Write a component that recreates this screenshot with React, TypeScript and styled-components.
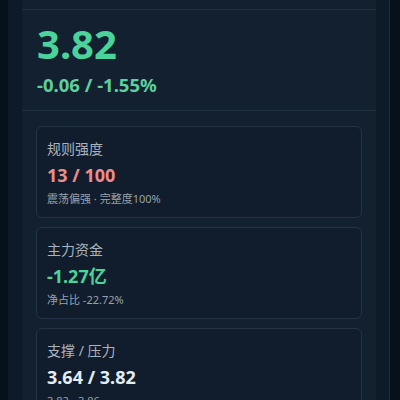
import React from "react";
import styled, { createGlobalStyle } from "styled-components";

const GlobalStyle = createGlobalStyle`
  html, body {
    margin: 0;
    padding: 0;
    background: #06111c;
    font-family: "Noto Sans", "Noto Sans CJK SC", sans-serif;
    overflow: hidden;
  }
`;

const Page = styled.div`
  height: 400px;
  padding: 0 10px 0 8px;
  display: flex;
`;

const Panel = styled.div`
  flex: 1;
  background: #0e1a28;
  border-right: 1px solid #1d2b3a;
  padding: 0 13px 0 14px;
  display: flex;
`;

const Column = styled.div`
  flex: 1;
  background: #122030;
  padding: 9px 0 0;
`;

const PriceSection = styled.section`
  border-top: 1px solid #223142;
  border-bottom: 1px solid #223142;
  padding: 10px 15px 14px;
`;

const Price = styled.div`
  font-size: 40px;
  line-height: 48px;
  font-weight: 700;
  color: #4ad49b;
`;

const Change = styled.div`
  margin-top: 5px;
  font-size: 18.5px;
  line-height: 23px;
  font-weight: 700;
  color: #5ccf9e;
`;

const CardList = styled.div`
  display: flex;
  flex-direction: column;
  gap: 9px;
  padding: 15px 14px 0;
`;

const Card = styled.div`
  border: 1px solid #243446;
  border-radius: 6px;
  background: #111d2c;
  padding: 12px 10px 10px;
`;

const CardTitle = styled.div`
  font-size: 14px;
  line-height: 20px;
  color: #a9b3bf;
`;

const CardValue = styled.div<{ tone: string }>`
  margin-top: 5px;
  font-size: 18px;
  line-height: 23px;
  font-weight: 700;
  color: ${(p) => p.tone};
`;

const CardNote = styled.div`
  margin-top: 4px;
  font-size: 11px;
  line-height: 16px;
  color: #97a2ae;
`;

const cards = [
  { title: "规则强度", value: "13 / 100", tone: "#ee8b8b", note: "震荡偏强 · 完整度100%" },
  { title: "主力资金", value: "-1.27亿", tone: "#4ad49b", note: "净占比 -22.72%" },
  { title: "支撑 / 压力", value: "3.64 / 3.82", tone: "#e4ecf4", note: "3.82 - 3.86" },
];

export default function App() {
  return (
    <Page>
      <GlobalStyle />
      <Panel>
        <Column>
          <PriceSection>
            <Price>3.82</Price>
            <Change>-0.06 / -1.55%</Change>
          </PriceSection>
          <CardList>
            {cards.map((c) => (
              <Card key={c.title}>
                <CardTitle>{c.title}</CardTitle>
                <CardValue tone={c.tone}>{c.value}</CardValue>
                <CardNote>{c.note}</CardNote>
              </Card>
            ))}
          </CardList>
        </Column>
      </Panel>
    </Page>
  );
}
